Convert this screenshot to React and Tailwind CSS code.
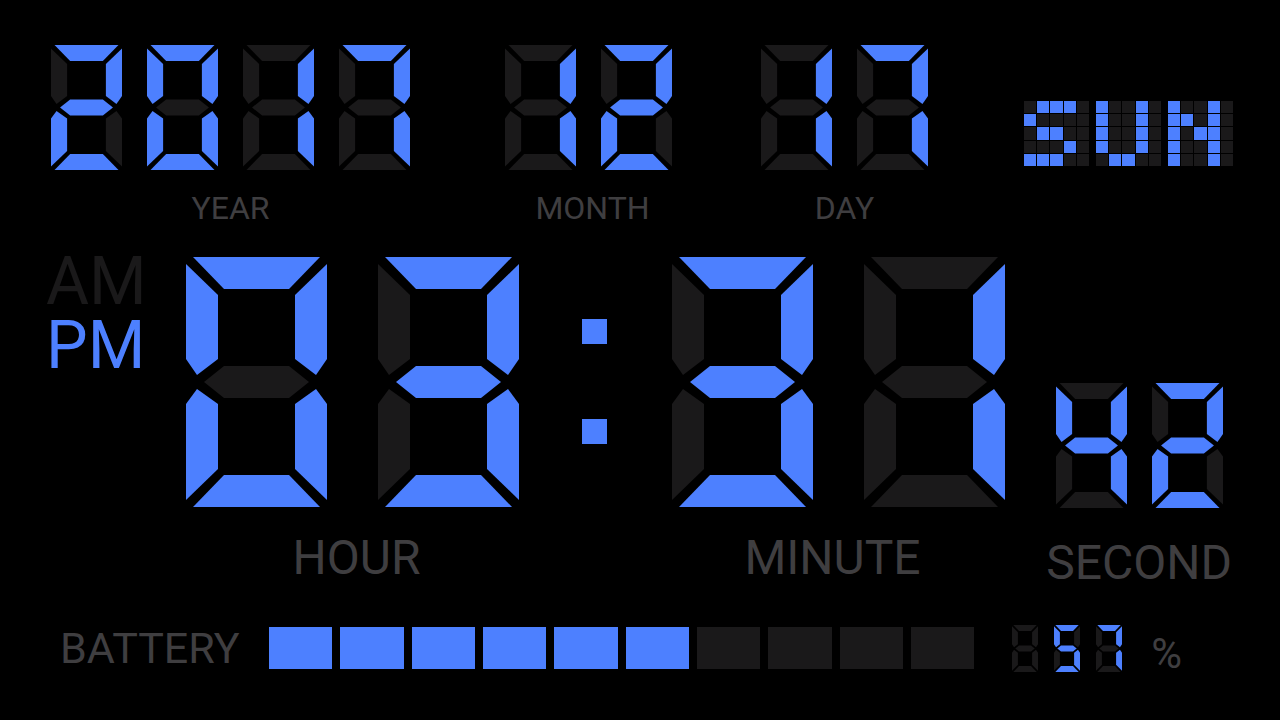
const SEGMENTS = {
  a: "7,0 134,0 103,32 38,32",
  b: "141,7 109,38 109,102 130,118 141,102",
  c: "130,132 141,147 141,243 109,212 109,147",
  d: "38,218 103,218 134,250 7,250",
  e: "11,132 32,147 32,212 0,243 0,147",
  f: "0,7 32,38 32,102 11,118 0,102",
  g: "18,125 38,109 103,109 123,125 103,141 38,141",
};

const LIT = {
  " ": "",
  0: "abcdef",
  1: "bc",
  2: "abdeg",
  3: "abcdg",
  4: "bcfg",
  5: "acdfg",
  6: "acdefg",
  7: "abc",
  8: "abcdefg",
  9: "abcdfg",
};

const GLYPHS = {
  S: ["01110", "10000", "01100", "00010", "11100"],
  U: ["10010", "10010", "10010", "10010", "01100"],
  N: ["10010", "11010", "10110", "10010", "10010"],
};

function Digits({ value, size, gap, label, inset = "" }) {
  return (
    <div role="img" aria-label={label} className={`flex ${gap} ${inset}`}>
      {value.split("").map((ch, i) => (
        <svg key={i} viewBox="0 0 141 250" preserveAspectRatio="none" className={`${size} shrink-0`}>
          {Object.entries(SEGMENTS).map(([name, points]) => (
            <polygon
              key={name}
              points={points}
              className={LIT[ch].includes(name) ? "fill-[#4d80ff]" : "fill-[#1a191a]"}
            />
          ))}
        </svg>
      ))}
    </div>
  );
}

function Field({ value, size, gap, label, text, space, inset }) {
  return (
    <div className={`flex flex-col items-center ${space}`}>
      <Digits value={value} size={size} gap={gap} inset={inset} label={`${label} ${value.trim()}`} />
      <div className={`text-[#3f3e40] ${text}`}>{label}</div>
    </div>
  );
}

function Matrix({ word }) {
  return (
    <div role="img" aria-label={word} className="flex gap-[7px]">
      {word.split("").map((ch, i) => (
        <div key={i} className="grid size-[65px] grid-cols-5 grid-rows-5 gap-px">
          {GLYPHS[ch].join("").split("").map((on, j) => (
            <span key={j} className={on === "1" ? "bg-[#4d80ff]" : "bg-[#1a191a]"} />
          ))}
        </div>
      ))}
    </div>
  );
}

const SMALL = "h-[125px] w-[71px]";
const LARGE = "h-[250px] w-[141px]";
const SMALL_TEXT = "text-[32px] leading-9";
const LARGE_TEXT = "text-[48px] leading-[54px]";

export default function App() {
  const battery = 57;
  return (
    <main className="flex min-h-screen flex-col bg-black pt-[45px] font-[Roboto,sans-serif]">
      <section className="flex items-start pr-[47px] pl-[51px]">
        <Field value="2017" label="YEAR" size={SMALL} gap="gap-[25px]" space="gap-5" text={SMALL_TEXT} />
        <div className="ml-[95px]">
          <Field value="12" label="MONTH" size={SMALL} gap="gap-[25px]" space="gap-5" text={SMALL_TEXT} inset="pr-2" />
        </div>
        <div className="ml-[81px]">
          <Field value="17" label="DAY" size={SMALL} gap="gap-[25px]" space="gap-5" text={SMALL_TEXT} />
        </div>
        <div className="mt-14 ml-auto">
          <Matrix word="SUN" />
        </div>
      </section>

      <section className="mt-[31px] flex items-start pr-12 pl-[46px]">
        <div className="-mt-[7px] flex w-[140px] flex-col text-[66px] leading-16">
          <span className="text-[#1a191a]">AM</span>
          <span className="text-[#4d80ff]">PM</span>
        </div>
        <Field value="03" label="HOUR" size={LARGE} gap="gap-[51px]" space="gap-6" text={LARGE_TEXT} inset="pr-2" />
        <div className="mt-[62px] ml-[55px] flex flex-col gap-[75px]">
          <span className="size-[25px] bg-[#4d80ff]" />
          <span className="size-[25px] bg-[#4d80ff]" />
        </div>
        <div className="ml-[53px]">
          <Field value="31" label="MINUTE" size={LARGE} gap="gap-[51px]" space="gap-6" text={LARGE_TEXT} inset="pl-3" />
        </div>
        <div className="mt-[126px] ml-auto">
          <Field value="42" label="SECOND" size={SMALL} gap="gap-[25px]" space="gap-7" text={LARGE_TEXT} />
        </div>
      </section>

      <section className="mt-[29px] flex items-center pr-[98px] pl-[60px]">
        <div className="w-[209px] text-[43px] leading-[46px] text-[#3f3e40]">BATTERY</div>
        <div
          role="meter"
          aria-label="Battery"
          aria-valuemin={0}
          aria-valuemax={100}
          aria-valuenow={battery}
          className="grid h-[42px] flex-1 grid-cols-10 gap-2"
        >
          {Array.from({ length: 10 }, (_, i) => (
            <span key={i} className={i * 10 < battery ? "bg-[#4d80ff]" : "bg-[#1a191a]"} />
          ))}
        </div>
        <div className="ml-[38px]">
          <Digits value=" 57" label="57" size="h-[47px] w-[26px]" gap="gap-4" />
        </div>
        <div className="mt-3 ml-[29px] text-[42px] leading-[46px] text-[#3f3e40]">%</div>
      </section>
    </main>
  );
}
